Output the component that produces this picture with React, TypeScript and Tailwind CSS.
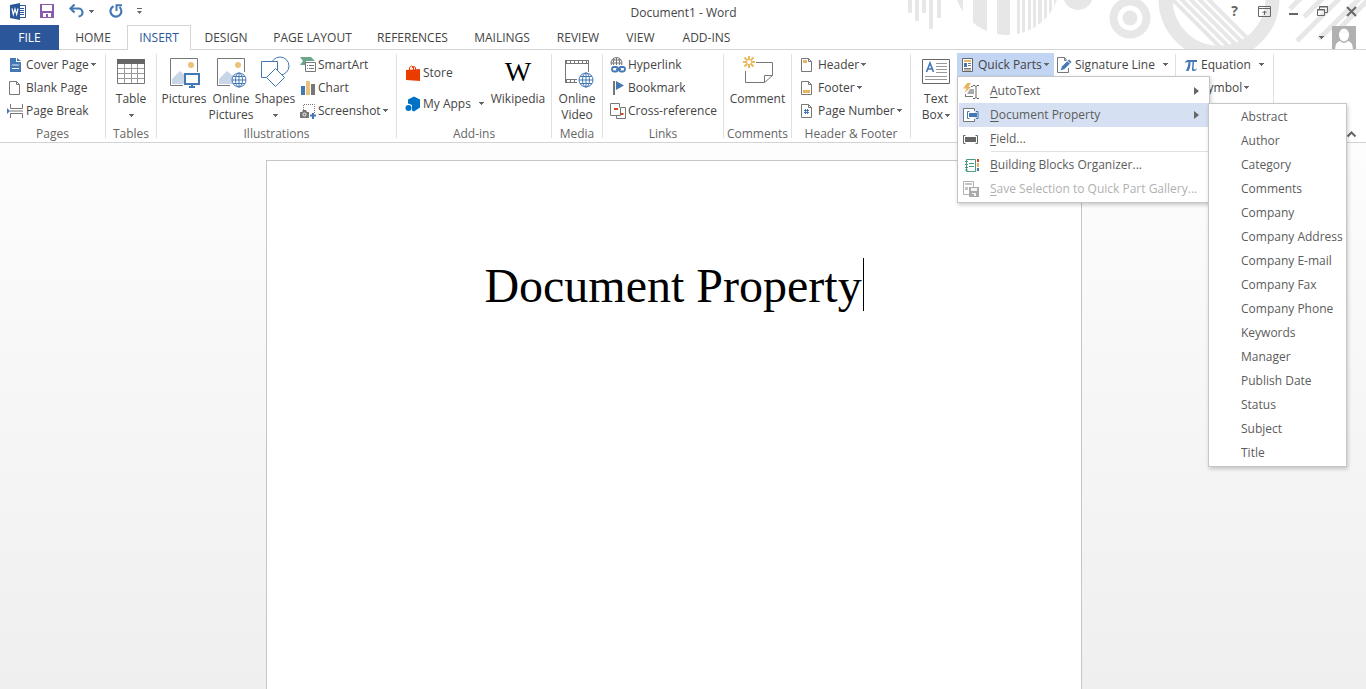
import React from 'react';

type IconProps = { children: React.ReactNode; w?: number; h?: number };

const Svg: React.FC<IconProps> = ({ children, w = 16, h = 16 }) => (
  <svg width={w} height={h} viewBox={`0 0 ${w} ${h}`} fill="none" className="shrink-0 overflow-visible" aria-hidden="true">
    {children}
  </svg>
);

const Caret = () => (
  <Svg w={5} h={3}>
    <path d="M0 0h5v1H4v1H3v1H2V2H1V1H0z" fill="#666" />
  </Svg>
);

/* Quick access toolbar */
const WordIcon = () => (
  <Svg w={16} h={17}>
    <path d="M9 2.500h6.500v12H9" fill="#fff" stroke="#2b579a" />
    <path d="M10 5.500h4M10 7.500h4M10 9.500h4M10 11.500h4" stroke="#2b579a" />
    <path d="M0 2l10-2v17L0 15z" fill="#2b579a" />
    <path d="M2 5.500l1.300 6L5 6l1.700 5.500L8 5.500" stroke="#fff" strokeWidth="1.200" />
  </Svg>
);

const SaveIcon = () => (
  <Svg w={14} h={14}>
    <path d="M0 0h14v14H0z" fill="#8a5bab" />
    <path d="M2 1h10v6H2zM3 9h8v4H8v-3H6v3H3z" fill="#fff" />
  </Svg>
);

const UndoIcon = () => (
  <Svg w={15} h={14}>
    <path d="M1.500 4.500h8a4 4 0 0 1 0 8" stroke="#4478b4" strokeWidth="2.200" />
    <path d="M5.500 0.500l-4 4 4 4" stroke="#4478b4" strokeWidth="2.200" />
  </Svg>
);

const RedoIcon = () => (
  <Svg w={14} h={14}>
    <path d="M4.500 2.200A5.500 5.500 0 1 0 10.500 3" stroke="#4478b4" strokeWidth="2.200" />
    <path d="M7.500 7V1.200H13" stroke="#4478b4" strokeWidth="2" />
  </Svg>
);

/* Small ribbon icons */
const PageOutline: React.FC<{ children?: React.ReactNode }> = ({ children }) => (
  <Svg>
    <path d="M1.500 1.500h7l3 3v10h-10z" fill="#fff" stroke="#777" />
    <path d="M8.500 1.500v3h3" stroke="#777" />
    {children}
  </Svg>
);

const CoverPageIcon = () => (
  <Svg>
    <path d="M2 1h6v4h5v10H2zM9 1l4 3H9z" fill="#4478b4" />
    <path d="M4 8.500l1-1 1 1 1-1 1 1 1-1 1 1 1-1M4 11.500h7" stroke="#fff" />
  </Svg>
);

const PageBreakIcon = () => (
  <Svg>
    <path d="M2.500 1v4.500h12V1M2.500 15v-4.500h12V15M2 8h13" stroke="#777" />
    <path d="M-1 5l3 3-3 3z" fill="#4478b4" />
  </Svg>
);

const SmartArtIcon = () => (
  <Svg>
    <path d="M0 0h11l4 4H6v4H0l3-4z" fill="#6aa58c" />
    <path d="M5.500 5.500h10v9h-10z" fill="#fff" stroke="#777" />
    <path d="M7 8.500h1M9 8.500h5M7 11.500h1M9 11.500h5" stroke="#777" />
  </Svg>
);

const ChartIcon = () => (
  <Svg>
    <path d="M1 6h4v9H1z" fill="#4478b4" />
    <path d="M6 1h4v14H6z" fill="#e9c27d" />
    <path d="M11 4h4v11h-4z" fill="#777" />
  </Svg>
);

const ScreenshotIcon = () => (
  <Svg>
    <path d="M3.500 7V1.500h11V10" stroke="#777" strokeDasharray="1 1" />
    <path d="M0 9h2l1-2h3l1 2h2v6H0z" fill="#777" />
    <circle cx="4.500" cy="11.500" r="1.500" stroke="#fff" />
    <path d="M10 12.500h6M13 10v6" stroke="#4478b4" strokeWidth="2" />
  </Svg>
);

const StoreIcon = () => (
  <Svg>
    <path d="M1 5l14-1v12L1 15z" fill="#eb3c00" />
    <path d="M4.500 6V2.500l2-1.500 2 1v3M7 3l2-1.500 1.500 1V5" stroke="#eb3c00" />
  </Svg>
);

const MyAppsIcon = () => (
  <Svg>
    <path d="M9 0.500l6 3v8l-6 4-2-1V9L3 7.500v-4z" fill="#0072c6" />
    <circle cx="3.500" cy="12" r="3" fill="#0072c6" />
  </Svg>
);

const HyperlinkIcon = () => (
  <Svg>
    <circle cx="6.500" cy="6" r="5.500" stroke="#777" />
    <path d="M1 6h11M6.500 0.500v11M2 3h9M4 1.500Q2.500 6 4 10M9 1.500q1.500 4.500 0 8.500" stroke="#777" />
    <path d="M1 8h15v8H1z" fill="#fff" />
    <rect x="2" y="10" width="6" height="4.500" rx="2.200" stroke="#4478b4" strokeWidth="1.800" />
    <rect x="9" y="10" width="6" height="4.500" rx="2.200" stroke="#4478b4" strokeWidth="1.800" />
    <path d="M6 12.300h5" stroke="#4478b4" strokeWidth="1.600" />
  </Svg>
);

const BookmarkIcon = () => (
  <Svg>
    <path d="M3 1h2v14H3z" fill="#777" />
    <path d="M6 1l8 4.500L6 10z" fill="#4478b4" />
  </Svg>
);

const CrossReferenceIcon = () => (
  <Svg>
    <path d="M7 12.500H0.500v-12h9v4" stroke="#777" />
    <path d="M10.500 4.500h5v11h-9v-3h4z" stroke="#777" />
    <path d="M4 5h4v2H4zM10.500 10h3v2h-3z" fill="#d24726" />
  </Svg>
);

const QuickPartsIcon = () => (
  <Svg>
    <path d="M2.500 1.500h10v13h-10z" fill="#fff" stroke="#666" />
    <path d="M4 3h7v2H4z" fill="#e9b562" />
    <path d="M4 6h3v4H4z" fill="#4478b4" />
    <path d="M8 6.500h3M8 8.500h3M4 11.500h7M4 13h7" stroke="#777" />
  </Svg>
);

const SignatureIcon = () => (
  <Svg>
    <path d="M11.500 11v4.500h-11V0.500h7l2 2.500" stroke="#777" />
    <path d="M7.500 0.500v3h2" stroke="#777" />
    <path d="M3.500 13.500L5 9.500l7-7 2.500 2.500-7 7z" fill="#4478b4" />
    <path d="M10.500 4l2.500 2.500" stroke="#fff" />
  </Svg>
);

const PiIcon = () => (
  <Svg>
    <path d="M2 6c0.500-2 1.500-3 3-3h9v2h-3l-0.500 6q0 2 2 1.500l1.500-1.500q-0.500 3-3 3T9 12l0.500-7h-2Q7.500 11 5.500 14H3Q5.500 9 5.500 5 3.500 5 2 6z" fill="#4478b4" />
  </Svg>
);

/* Large ribbon icons */
const TableIcon = () => (
  <Svg w={28} h={28}>
    <path d="M0.500 2.500h27v23H0.500z" fill="#fff" stroke="#777" />
    <path d="M0 1h28v5H0z" fill="#666" />
    <path d="M1 10.500h26M1 15.500h26M1 20.500h26M7.500 6v19M14.500 6v19M20.500 6v19" stroke="#999" />
  </Svg>
);

const PictureBase = () => (
  <>
    <path d="M13 27.500H0.500v-27h27V14" stroke="#777" />
    <circle cx="21" cy="7" r="3" fill="#ecc27a" />
    <path d="M2 26v-5l8-8 6 5v8z" fill="#c9d6e8" />
  </>
);

const PicturesIcon = () => (
  <Svg w={28} h={28}>
    <PictureBase />
    <path d="M15 16h14v10H15z" fill="#fff" stroke="#4478b4" strokeWidth="2" />
    <path d="M19 29h6M22 27v2" stroke="#4478b4" strokeWidth="2" />
  </Svg>
);

const Globe: React.FC<{ cx: number; cy: number }> = ({ cx, cy }) => (
  <g transform={`translate(${cx} ${cy})`} stroke="#4478b4">
    <circle r="7" fill="#fff" />
    <ellipse rx="3.500" ry="7" />
    <path d="M-7 0H7M0-7V7M-6-3.500H6M-6 3.500H6" />
  </g>
);

const OnlinePicturesIcon = () => (
  <Svg w={28} h={28}>
    <PictureBase />
    <Globe cx={22} cy={22} />
  </Svg>
);

const ShapesIcon = () => (
  <Svg w={30} h={31}>
    <circle cx="20" cy="9" r="9" fill="#fff" stroke="#4478b4" />
    <path d="M1.500 4.500h16v16h-16z" fill="#fff" stroke="#4478b4" />
    <path d="M15.500 11.500l9 9-9 9-9-9z" fill="#fff" stroke="#4478b4" />
  </Svg>
);

const VideoIcon = () => (
  <Svg w={24} h={28}>
    <path d="M0.500 2v23M23.500 2v12M0 2.500h24M0 5.500h24M0 21.500h12M0 24.500h12" stroke="#777" />
    <path d="M1 4h23M1 23h11" stroke="#777" strokeWidth="2" strokeDasharray="1 3" />
    <Globe cx={21} cy={22} />
  </Svg>
);

const CommentIcon = () => (
  <Svg w={32} h={32}>
    <path d="M14 6.500h16.500v13l-8 7H3.500V15" stroke="#777" />
    <path d="M22.500 26.500v-7h8" stroke="#777" />
    <path d="M7 0v12M1 6h12M2.500 1.500l9 9M11.500 1.500l-9 9" stroke="#ecb95f" strokeWidth="2" />
    <circle cx="7" cy="6" r="2" fill="#fff" />
  </Svg>
);

const TextBoxIcon = () => (
  <Svg w={28} h={28}>
    <path d="M0.500 1.500h27v24H0.500z" fill="#fff" stroke="#666" />
    <path d="M4.500 14L8 5l3.500 9M6 11h4.500" stroke="#4478b4" strokeWidth="1.600" />
    <path d="M14 5.500h11M14 8.500h11M14 11.500h11M14 14.500h11M3 18.500h22M3 21.500h22" stroke="#999" />
  </Svg>
);

/* Menu icons */
const AutoTextIcon = () => (
  <Svg>
    <path d="M4 0h4L5.500 4H8L1.500 10 3.500 5.500H0z" fill="#e9b562" />
    <path d="M8 3.500h2M2 13.500h8M2.500 11v3" stroke="#777" />
    <path d="M4 11l3-5h4v5z" fill="#aaa" />
    <path d="M10 2.500h2l1 1 1-1h2M13 3v12M10 15.500h2l1-1 1 1h2" stroke="#666" />
  </Svg>
);

const DocPropertyIcon = () => (
  <Svg>
    <path d="M11.500 4V1.500H0.500v13h11V12" fill="#fff" stroke="#777" />
    <path d="M6.500 4.500h-2v7h2M13 4.500h2v7h-2" stroke="#4478b4" />
    <path d="M6 6h8v4H6z" fill="#4478b4" />
  </Svg>
);

const FieldIcon = () => (
  <Svg>
    <path d="M2.500 4.500h-2v8h2M12.500 4.500h2v8h-2" stroke="#666" />
    <path d="M2 6h11v5H2z" fill="#666" />
  </Svg>
);

const OrganizerIcon = () => (
  <Svg>
    <path d="M3.500 2.500h9v12h-9z" fill="#fff" stroke="#4a9a80" />
    <path d="M2 4.500h3M2 7.500h3M2 10.500h3M2 13h3M6 6.500h5M6 9.500h5" stroke="#4a9a80" />
    <path d="M14 2h2v3h-2z" fill="#d24726" />
    <path d="M14 6h2v4h-2z" fill="#e9b562" />
    <path d="M14 11h2v3h-2z" fill="#4478b4" />
  </Svg>
);

const SaveSelectionIcon = () => (
  <Svg>
    <path d="M6 13.500H0.500v-13h10V6" stroke="#b1b1b1" />
    <path d="M2 2h7v2H2zM2 6h3v3H2zM6 6h3v1H6z" fill="#c4c4c4" />
    <path d="M6 6h10v10H6z" fill="#aaa" />
    <path d="M8 7h6v3H8zM9 12h4v3H9z" fill="#f4f4f4" />
    <path d="M9 13h2v2H9z" fill="#aaa" />
  </Svg>
);

/* Ribbon building blocks */
interface GroupProps {
  label?: string;
  width: string;
  children: React.ReactNode;
}

const Group: React.FC<GroupProps> = ({ label, width, children }) => (
  <>
    <section className={`${width} shrink-0 flex flex-col pt-[3px]`} aria-label={label}>
      <div className="flex h-[73px]">{children}</div>
      {label && <div className="text-center leading-4 text-[#666]">{label}</div>}
    </section>
    <div className="w-px shrink-0 my-1 bg-[#e1e1e1]" />
  </>
);

interface ButtonProps {
  icon: React.ReactNode;
  label: string;
  caret?: boolean;
  wide?: boolean;
}

const SmallButton: React.FC<ButtonProps> = ({ icon, label, caret, wide }) => (
  <button type="button" className="flex h-[23px] items-center gap-[2px] whitespace-nowrap">
    {icon}
    <span>{label}</span>
    {caret && <span className={wide ? 'pl-[6px]' : ''}><Caret /></span>}
  </button>
);

interface LargeProps {
  icon: React.ReactNode;
  lines: string[];
  width: string;
  caret?: 'below' | 'inline';
}

const LargeButton: React.FC<LargeProps> = ({ icon, lines, width, caret }) => (
  <button type="button" className={`${width} flex flex-col items-center leading-4`}>
    <span className="flex h-[38px] items-center justify-center">{icon}</span>
    {lines.map((line, i) => (
      <span key={line} className="flex items-center gap-[2px] whitespace-nowrap">
        {line}
        {caret === 'inline' && i === lines.length - 1 && <Caret />}
      </span>
    ))}
    {caret === 'below' && <span className="flex h-4 items-center"><Caret /></span>}
  </button>
);

const properties = [
  'Abstract', 'Author', 'Category', 'Comments', 'Company', 'Company Address', 'Company E-mail', 'Company Fax',
  'Company Phone', 'Keywords', 'Manager', 'Publish Date', 'Status', 'Subject', 'Title',
];

interface MenuItemProps {
  icon: React.ReactNode;
  label: string;
  arrow?: boolean;
  active?: boolean;
  disabled?: boolean;
}

const MenuItem: React.FC<MenuItemProps> = ({ icon, label, arrow, active, disabled }) => (
  <button
    type="button"
    role="menuitem"
    disabled={disabled}
    className={`flex h-6 w-full items-center pl-1 pr-[9px] text-left ${active ? 'bg-[#d5e1f2]' : ''} ${disabled ? 'text-[#b1b1b1]' : 'text-[#5c5c5c]'}`}
  >
    {icon}
    <span className="flex-1 whitespace-nowrap pl-[11px]">
      <span className="underline underline-offset-2">{label[0]}</span>{label.slice(1)}
    </span>
    {arrow && <Svg w={5} h={8}><path d="M0 0l5 4-5 4z" fill="#666" /></Svg>}
  </button>
);

const QuickPartsMenu = () => (
  <div role="menu" className="absolute left-0 top-full z-10 w-[253px] border border-[#c6c6c6] bg-white px-px pb-px pt-[2px] shadow-[1px_2px_4px_rgba(0,0,0,0.2)]">
    <MenuItem icon={<AutoTextIcon />} label="AutoText" arrow />
    <div className="relative">
      <MenuItem icon={<DocPropertyIcon />} label="Document Property" arrow active />
      <div role="menu" className="absolute left-full top-0 w-[139px] border border-[#c6c6c6] bg-white py-px shadow-[1px_2px_4px_rgba(0,0,0,0.2)]">
        {properties.map((p) => (
          <button key={p} type="button" role="menuitem" className="block h-6 w-full whitespace-nowrap pl-8 text-left text-[#5c5c5c]">
            {p}
          </button>
        ))}
      </div>
    </div>
    <MenuItem icon={<FieldIcon />} label="Field..." />
    <div className="ml-8 h-[2px] border-t border-[#e1e1e1]" />
    <MenuItem icon={<OrganizerIcon />} label="Building Blocks Organizer..." />
    <MenuItem icon={<SaveSelectionIcon />} label="Save Selection to Quick Part Gallery..." disabled />
  </div>
);

const tabs = [
  { name: 'FILE', style: 'w-[59px] h-full bg-[#2b579a] text-white' },
  { name: 'HOME', style: 'w-[68px]' },
  { name: 'INSERT', style: 'w-16 h-full border border-b-0 border-[#d4d4d4] bg-white text-[#2b579a]' },
  { name: 'DESIGN', style: 'w-[70px]' },
  { name: 'PAGE LAYOUT', style: 'w-[103px]' },
  { name: 'REFERENCES', style: 'w-[97px]' },
  { name: 'MAILINGS', style: 'w-[82px]' },
  { name: 'REVIEW', style: 'w-[70px]' },
  { name: 'VIEW', style: 'w-[55px]' },
  { name: 'ADD-INS', style: 'w-[77px]' },
];

/* Circles and stripes behind the window buttons */
const HeaderPattern = () => (
  <svg width="461" height="49" viewBox="0 0 461 49" className="absolute right-0 top-0" fill="none" aria-hidden="true">
    <defs>
      <clipPath id="striped"><circle cx="102" cy="-18" r="53" /></clipPath>
      <clipPath id="ring"><circle cx="314" cy="-1" r="47" /></clipPath>
    </defs>
    <g fill="#e7e7e7">
      <path d="M3 0h4v13H3zM10 0h4v21h-4zM17 0h4v13h-4zM24 0h4v29h-4zM32 0h4v18h-4z" />
      <g clipPath="url(#striped)">
        <path d="M40 0h18v35z M68 0h14v49H68zM92 0h13v49H92zM112 0h3v49h-3zM117 0h3v49h-3zM123 0h3v49h-3zM128 0h3v49h-3zM133 0h4v49h-4zM139 0h3v49h-3zM144 0h3v49h-3zM149 0h3v49h-3z" />
      </g>
      <circle cx="173" cy="-5" r="15" />
      <circle cx="225" cy="18" r="7.500" />
    </g>
    <g stroke="#e7e7e7">
      <circle cx="225" cy="18" r="16.500" strokeWidth="8" />
      <circle cx="314" cy="-1" r="53.500" strokeWidth="14" />
      <g clipPath="url(#ring)" strokeWidth="4">
        <path d="M266-2l50 50M275-2l50 50M284-2l50 50M293-2l50 50M302-2l50 50" />
      </g>
      <g strokeWidth="5">
        <path d="M385 9l12-12M399 17l20-20M392 41l43-43M414 39l42-42M436 27l28-28" />
      </g>
    </g>
  </svg>
);

const App: React.FC = () => {
  return (
    <div className="flex min-h-screen flex-col overflow-hidden bg-white font-['Open_Sans','Noto_Sans',sans-serif] text-xs text-[#444]">
      <header className="relative">
        <HeaderPattern />

        {/* Title bar */}
        <div className="relative flex h-[25px] items-start justify-between">
          <div className="flex h-[22px] flex-1 items-center pl-[10px]">
            <button type="button" aria-label="Word" className="mr-[14px]"><WordIcon /></button>
            <button type="button" aria-label="Save" className="mr-[15px]"><SaveIcon /></button>
            <button type="button" aria-label="Undo" className="mr-[15px] flex items-center gap-[5px]"><UndoIcon /><Caret /></button>
            <button type="button" aria-label="Repeat" className="mr-[14px]"><RedoIcon /></button>
            <button type="button" aria-label="Customize Quick Access Toolbar">
              <Svg w={5} h={6}><path d="M0 0.500h5" stroke="#666" /><path d="M0 3h5L2.500 6z" fill="#666" /></Svg>
            </button>
          </div>
          <div className="leading-[26px]">Document1 - Word</div>
          <div className="flex h-[22px] flex-1 items-center justify-end gap-4 pr-[9px]">
            <button type="button" aria-label="Help" className="mr-1 text-sm font-bold leading-4 text-[#666]">?</button>
            <button type="button" aria-label="Ribbon Display Options">
              <Svg w={14} h={11}><path d="M0.500 0.500h12v10H0.500zM0 2.500h13M6.500 9V5M4.500 7l2-2 2 2" stroke="#666" /></Svg>
            </button>
            <button type="button" aria-label="Minimize">
              <Svg w={13} h={11}><path d="M1 8h9" stroke="#666" strokeWidth="2" /></Svg>
            </button>
            <button type="button" aria-label="Restore">
              <Svg w={13} h={11}><path d="M2.500 3.500v-3h8v6H8M0.500 3.500h7v6h-7zM2 1h9M0 4h8" stroke="#666" /></Svg>
            </button>
            <button type="button" aria-label="Close">
              <Svg w={11} h={11}><path d="M1 1l9 9M10 1l-9 9" stroke="#666" strokeWidth="2" /></Svg>
            </button>
          </div>
        </div>

        {/* Tabs */}
        <nav className="relative flex h-[25px] items-center">
          <div className="absolute inset-x-0 bottom-0 h-px bg-[#d4d4d4]" />
          {tabs.map((tab) => (
            <button key={tab.name} type="button" className={`relative shrink-0 whitespace-nowrap text-center ${tab.style}`}>
              {tab.name}
            </button>
          ))}
          <button type="button" aria-label="Account" className="ml-auto mr-[10px] flex h-full items-center gap-2">
            <Caret />
            <Svg w={24} h={24}>
              <path d="M0 0h24v24H0z" fill="#b1b1b1" />
              <path d="M3 24q0-8 5-9 2 2 4 2t4-2q5 1 5 9z" fill="#fff" />
              <ellipse cx="12" cy="9" rx="5" ry="6.500" fill="#fff" />
            </Svg>
          </button>
        </nav>
      </header>

      {/* Ribbon */}
      <div className="flex h-[93px] border-b border-[#d4d4d4] bg-white">
        <Group label="Pages" width="w-[105px]">
          <div className="pl-2">
            <SmallButton icon={<CoverPageIcon />} label="Cover Page" caret />
            <SmallButton icon={<PageOutline />} label="Blank Page" />
            <SmallButton icon={<PageBreakIcon />} label="Page Break" />
          </div>
        </Group>
        <Group label="Tables" width="w-[50px]">
          <LargeButton icon={<TableIcon />} lines={['Table']} width="w-full" caret="below" />
        </Group>
        <Group label="Illustrations" width="w-[239px]">
          <div className="flex gap-px pl-1">
            <LargeButton icon={<PicturesIcon />} lines={['Pictures']} width="w-[46px]" />
            <LargeButton icon={<OnlinePicturesIcon />} lines={['Online', 'Pictures']} width="w-[46px]" />
            <LargeButton icon={<ShapesIcon />} lines={['Shapes']} width="w-10" caret="below" />
            <div className="pl-1">
              <SmallButton icon={<SmartArtIcon />} label="SmartArt" />
              <SmallButton icon={<ChartIcon />} label="Chart" />
              <SmallButton icon={<ScreenshotIcon />} label="Screenshot" caret />
            </div>
          </div>
        </Group>
        <Group label="Add-ins" width="w-[154px]">
          <div className="flex flex-col gap-2 pl-2 pt-2">
            <SmallButton icon={<StoreIcon />} label="Store" />
            <SmallButton icon={<MyAppsIcon />} label="My Apps" caret wide />
          </div>
          <LargeButton
            icon={<span className="font-['Liberation_Serif',serif] text-[28px] text-black">W</span>}
            lines={['Wikipedia']}
            width="ml-auto w-[66px]"
          />
        </Group>
        <Group label="Media" width="w-[50px]">
          <LargeButton icon={<VideoIcon />} lines={['Online', 'Video']} width="w-full" />
        </Group>
        <Group label="Links" width="w-[120px]">
          <div className="pl-[7px]">
            <SmallButton icon={<HyperlinkIcon />} label="Hyperlink" />
            <SmallButton icon={<BookmarkIcon />} label="Bookmark" />
            <SmallButton icon={<CrossReferenceIcon />} label="Cross-reference" />
          </div>
        </Group>
        <Group label="Comments" width="w-[67px]">
          <LargeButton icon={<CommentIcon />} lines={['Comment']} width="w-full" />
        </Group>
        <Group label="Header & Footer" width="w-[118px]">
          <div className="pl-2">
            <SmallButton icon={<PageOutline><path d="M3 3h4v3H3z" fill="#e9b562" /></PageOutline>} label="Header" caret />
            <SmallButton icon={<PageOutline><path d="M3 10h7v3H3z" fill="#e9b562" /></PageOutline>} label="Footer" caret />
            <SmallButton
              icon={<PageOutline><path d="M4 7.500h5M4 9.500h5M5.500 6v5M7.500 6v5" stroke="#4478b4" /></PageOutline>}
              label="Page Number"
              caret
            />
          </div>
        </Group>
        <Group width="w-[264px]">
          <LargeButton icon={<TextBoxIcon />} lines={['Text', 'Box']} width="w-[46px] pl-1" caret="inline" />
          <div className="relative h-[23px] w-[97px] bg-[#c2d5f2] pl-[3px]">
            <SmallButton icon={<QuickPartsIcon />} label="Quick Parts" caret />
            <QuickPartsMenu />
          </div>
          <div className="pl-[3px]">
            <SmallButton icon={<SignatureIcon />} label="Signature Line" caret wide />
          </div>
        </Group>
        <Group width="w-[97px]">
          <div className="pl-[7px]">
            <SmallButton icon={<PiIcon />} label="Equation" caret wide />
            <SmallButton icon={<Svg><path d="M2 13h4q-3-3-3-6a5 5 0 0 1 10 0q0 3-3 6h4" stroke="#4478b4" strokeWidth="2" /></Svg>} label="Symbol" caret />
          </div>
        </Group>
        <button type="button" aria-label="Collapse the Ribbon" className="mb-[5px] ml-auto mr-[10px] self-end">
          <Svg w={9} h={6}><path d="M0.500 5.500l4-4 4 4" stroke="#666" strokeWidth="2" /></Svg>
        </button>
      </div>

      {/* Document */}
      <main className="flex flex-1 justify-center bg-linear-to-b from-[#fdfdfd] to-[#efefef] pr-[18px] pt-[17px]">
        <article className="w-[816px] border border-b-0 border-[#c6c6c6] bg-white pt-[97px]">
          <h1 className="flex justify-center gap-px whitespace-nowrap font-['Liberation_Serif',serif] text-5xl leading-[55px] text-black">
            Document Property
            <span className="h-[53px] w-px bg-black" />
          </h1>
        </article>
      </main>
    </div>
  );
};

export default App;
